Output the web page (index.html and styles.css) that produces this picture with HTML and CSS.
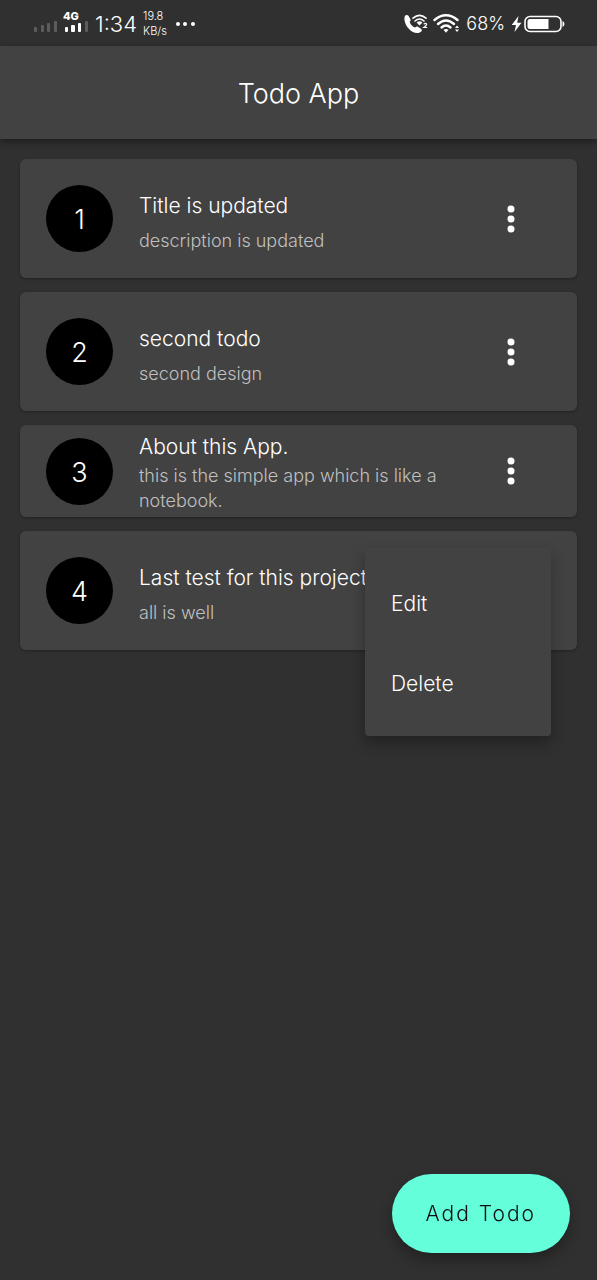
FILE: index.html
```html
<!DOCTYPE html>
<html lang="en">
<head>
<meta charset="utf-8">
<meta name="viewport" content="width=device-width, initial-scale=1">
<title>Todo App</title>
<link rel="stylesheet" href="styles.css">
</head>
<body>
<div class="status-bar">
  <div class="status-left">
    <svg class="signal" width="54" height="24" viewBox="0 0 54 24" aria-hidden="true">
      <g fill="#5c5c5c">
        <rect x="0" y="17" width="3" height="5" rx="1"/><rect x="7" y="15" width="3" height="7" rx="1"/><rect x="13" y="13" width="3" height="9" rx="1"/><rect x="20" y="11" width="3" height="11" rx="1"/>
        <rect x="51" y="11" width="3" height="11" rx="1"/>
      </g>
      <g fill="#fff">
        <rect x="31" y="17" width="3" height="5" rx="1"/><rect x="37" y="15" width="4" height="7" rx="1"/><rect x="44" y="13" width="3" height="9" rx="1"/>
      </g>
      <text class="network" x="29" y="10">4G</text>
    </svg>
    <span class="clock">1:34</span>
    <span class="speed"><span>19.8</span><span>KB/s</span></span>
    <svg width="20" height="6" viewBox="0 0 20 6" fill="#fff" aria-hidden="true"><circle cx="3" cy="3" r="2"/><circle cx="10" cy="3" r="2"/><circle cx="18" cy="3" r="2"/></svg>
  </div>
  <div class="status-right">
    <svg width="24" height="20" viewBox="0 0 24 20" aria-hidden="true">
      <path fill="#fff" d="M1.2 1.6C2.2.6 3.8.7 4.6 2L6.400 5.200C7 6.300 6.600 7 5.700 7.800C6.300 10.500 8.500 12.800 11.200 13.500C12 12.500 12.900 12.200 13.900 12.800L16.900 14.700C18.200 15.500 18.200 16.800 17 17.700C13.500 20.300 8.500 18.700 5 15C1 11-.8 4.500 1.200 1.600Z"/>
      <g fill="none" stroke="#fff" stroke-width="1.600" stroke-linecap="round"><path d="M9 4.200Q15.500-1.300 22 4.200"/><path d="M11 7Q15.500 3 20 7"/></g>
      <path fill="#fff" d="M12.600 8.400Q15.500 6 18.400 8.400L15.500 11.600Z"/>
      <path fill="none" stroke="#fff" stroke-width="1.200" d="M19.700 10.200Q21.300 8.700 22.500 9.800Q23.200 11 19.800 13.500H23.200"/>
    </svg>
    <svg class="wifi" width="27" height="20" viewBox="0 0 27 20" aria-hidden="true">
      <g fill="none" stroke="#fff" stroke-width="2.400" stroke-linecap="round"><path d="M1.500 6Q13-3.500 24.500 6"/><path d="M5 10Q13 3 21 10"/><path d="M8.500 13.500Q13 9.500 17.500 13.500"/></g>
      <path fill="#fff" d="M10.500 15.800Q13 14 15.500 15.800L13 18.700ZM22 14L24 11.500L26 14ZM22 15.500L24 18L26 15.500Z"/>
    </svg>
    <span class="battery-level">68%</span>
    <svg width="54" height="18" viewBox="0 0 54 18" aria-hidden="true">
      <path fill="#fff" d="M7.500 1L.7 10H5L3.500 17L10.500 7.800H6.200Z"/>
      <rect x="14" y="1.500" width="36" height="15" rx="5" fill="none" stroke="#fff" stroke-width="1.600"/>
      <path fill="#fff" d="M19 4H37.500V14H19Q16.500 14 16.500 11.500V6.500Q16.500 4 19 4ZM51.500 6Q53.500 7 53.500 9T51.500 12Z"/>
    </svg>
  </div>
</div>
<header class="app-bar"><h1 class="app-title">Todo App</h1></header>
<main class="todo-list">
  <article class="todo">
    <span class="badge">1</span>
    <div class="todo-text"><h2 class="todo-title">Title is updated</h2><p class="todo-desc">description is updated</p></div>
    <button class="more" type="button" aria-label="More options"><svg width="8" height="28" viewBox="0 0 8 28" fill="#fff"><circle cx="4" cy="4" r="3.500"/><circle cx="4" cy="14" r="3.500"/><circle cx="4" cy="24" r="3.500"/></svg></button>
  </article>
  <article class="todo">
    <span class="badge">2</span>
    <div class="todo-text"><h2 class="todo-title">second todo</h2><p class="todo-desc">second design</p></div>
    <button class="more" type="button" aria-label="More options"><svg width="8" height="28" viewBox="0 0 8 28" fill="#fff"><circle cx="4" cy="4" r="3.500"/><circle cx="4" cy="14" r="3.500"/><circle cx="4" cy="24" r="3.500"/></svg></button>
  </article>
  <article class="todo todo-compact">
    <span class="badge">3</span>
    <div class="todo-text"><h2 class="todo-title">About this App.</h2><p class="todo-desc">this is the simple app which is like a notebook.</p></div>
    <button class="more" type="button" aria-label="More options"><svg width="8" height="28" viewBox="0 0 8 28" fill="#fff"><circle cx="4" cy="4" r="3.500"/><circle cx="4" cy="14" r="3.500"/><circle cx="4" cy="24" r="3.500"/></svg></button>
  </article>
  <article class="todo">
    <span class="badge">4</span>
    <div class="todo-text"><h2 class="todo-title">Last test for this project</h2><p class="todo-desc">all is well</p></div>
    <div class="menu">
      <button class="menu-item" type="button">Edit</button>
      <button class="menu-item" type="button">Delete</button>
    </div>
  </article>
</main>
<button class="add-button" type="button">Add Todo</button>
</body>
</html>
```
FILE: styles.css
```css
* { box-sizing: border-box; }
body {
  margin: 0;
  min-height: 100vh;
  background: #303030;
  color: #fff;
  font-family: Inter, "Liberation Sans", sans-serif;
  font-weight: 300;
}
button { border: 0; font: inherit; color: inherit; cursor: pointer; }
h1, h2, p { margin: 0; font-weight: 300; }

.status-bar {
  display: flex;
  justify-content: space-between;
  align-items: center;
  height: 46px;
  padding: 2px 32px 0 34px;
}
.status-left, .status-right { display: flex; align-items: center; }
.signal { margin-bottom: 4px; }
.network { font-size: 11px; font-weight: 800; fill: #fff; }
.clock { margin: 0 6px 0 7px; font-size: 22px; line-height: 28px; }
.speed {
  display: flex;
  flex-direction: column;
  margin-right: 8px;
  font-size: 11px;
  line-height: 15px;
}
.wifi { margin: 0 6px 0 5px; }
.battery-level { margin-right: 6px; font-size: 18px; line-height: 24px; }

.app-bar {
  display: flex;
  align-items: center;
  justify-content: center;
  height: 93px;
  padding-top: 3px;
  background: #424242;
  box-shadow: 0 3px 7px rgba(0, 0, 0, 0.4);
}
.app-title { font-size: 27px; line-height: 34px; }

.todo-list {
  display: flex;
  flex-direction: column;
  gap: 14px;
  padding: 20px;
}
.todo {
  position: relative;
  display: flex;
  align-items: center;
  min-height: 119px;
  padding: 0 26px;
  border-radius: 6px;
  background: #424242;
  box-shadow: 0 1px 3px rgba(0, 0, 0, 0.3);
}
.badge {
  display: flex;
  align-items: center;
  justify-content: center;
  flex: none;
  width: 67px;
  height: 67px;
  border-radius: 50%;
  background: #000;
  font-size: 27px;
  padding-top: 2px;
}
.todo-text {
  flex: 1;
  display: flex;
  flex-direction: column;
  gap: 8px;
  margin-left: 26px;
  padding-top: 7px;
}
.todo-title { font-size: 21px; line-height: 28px; }
.todo-desc { color: #c0c0c0; font-size: 18px; line-height: 25px; }
.todo-compact { min-height: 92px; }
.todo-compact .todo-text { gap: 2px; padding-top: 4px; }
.more {
  display: flex;
  align-items: center;
  justify-content: center;
  flex: none;
  width: 80px;
  height: 80px;
  padding: 0;
  background: none;
}
.menu {
  position: absolute;
  top: 17px;
  right: 26px;
  z-index: 1;
  width: 186px;
  padding: 15px 0 13px;
  border-radius: 4px;
  background: #424242;
  box-shadow: 0 7px 14px rgba(0, 0, 0, 0.3);
}
.menu-item {
  display: block;
  width: 100%;
  height: 80px;
  padding: 0 26px;
  background: none;
  font-size: 21px;
  text-align: left;
}
.add-button {
  position: fixed;
  right: 27px;
  bottom: 27px;
  height: 79px;
  padding: 0 34px;
  border-radius: 40px;
  background: #64ffda;
  color: #111;
  font-size: 21px;
  letter-spacing: 2px;
  box-shadow: 0 7px 14px rgba(0, 0, 0, 0.3);
}
```
